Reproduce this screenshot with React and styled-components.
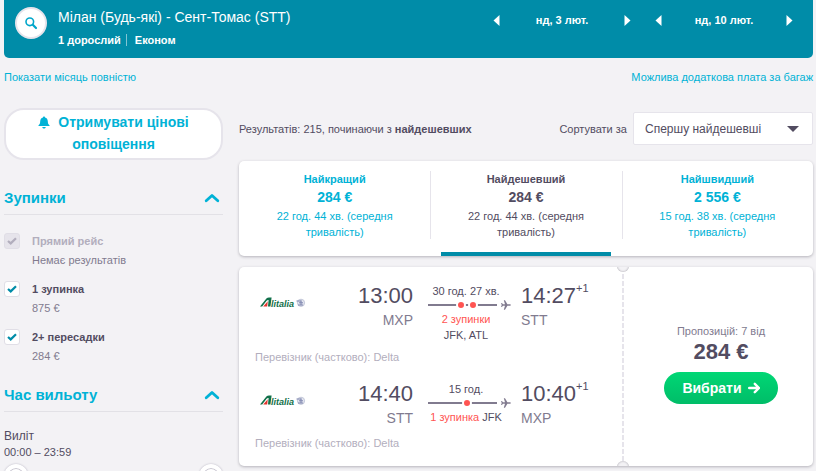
import React, { useState } from 'react'
import styled, { createGlobalStyle, css } from 'styled-components'

const tabs = [
    { id: 'best', name: 'Найкращий', price: '284 €', time: '22 год. 44 хв. (середня тривалість)' },
    { id: 'cheap', name: 'Найдешевший', price: '284 €', time: '22 год. 44 хв. (середня тривалість)' },
    { id: 'fast', name: 'Найшвидший', price: '2 556 €', time: '15 год. 38 хв. (середня тривалість)' },
]

const stopFilters = [
    { id: 'direct', name: 'Прямий рейс', note: 'Немає результатів', disabled: true },
    { id: 'one', name: '1 зупинка', note: '875 €' },
    { id: 'two', name: '2+ пересадки', note: '284 €' },
]

const legs = [
    { from: 'MXP', to: 'STT', start: '13:00', end: '14:27', duration: '30 год. 27 хв.', stops: '2 зупинки', via: ['JFK', 'ATL'] },
    { from: 'STT', to: 'MXP', start: '14:40', end: '10:40', duration: '15 год.', stops: '1 зупинка', via: ['JFK'] },
]

export default function App() {
    const [tab, setTab] = useState('cheap')

    return (
        <Page>
            <GlobalStyle />
            <Header>
                <SearchButton aria-label='Шукати'>
                    <svg width='14' height='14' viewBox='0 0 14 14' fill='none' stroke='currentColor' strokeWidth='1.6'>
                        <circle cx='5.8' cy='5.8' r='3.8' />
                        <path d='M8.8 8.8L12 12' strokeWidth='2.2' strokeLinecap='round' />
                    </svg>
                </SearchButton>
                <Trip>
                    <TripTitle>Мілан (Будь-які) - Сент-Томас (STT)</TripTitle>
                    <TripInfo>
                        <span>1 дорослий</span>
                        <span>Економ</span>
                    </TripInfo>
                </Trip>
                <Dates>
                    <DateStepper date='нд, 3 лют.' />
                    <DateStepper date='нд, 10 лют.' />
                </Dates>
            </Header>

            <Links>
                <Link href='#month'>Показати місяць повністю</Link>
                <Link href='#baggage'>Можлива додаткова плата за багаж</Link>
            </Links>

            <Columns>
                <Sidebar>
                    <AlertButton>
                        <svg width='12' height='13' viewBox='0 0 12 13' fill='currentColor'>
                            <path d='M6 0.5C6.6 0.5 7 .9 7 1.5C8.8 2 9.7 3.4 9.8 5.2C9.9 7.4 10.2 8 11.5 9.2V10H.5V9.2C1.8 8 2.1 7.4 2.2 5.2C2.3 3.4 3.2 2 5 1.5C5 .9 5.4 .5 6 .5Z' />
                            <path d='M4.2 11H7.8C7.5 12 6.8 12.5 6 12.5S4.5 12 4.2 11Z' />
                        </svg>
                        Отримувати цінові оповіщення
                    </AlertButton>

                    <FilterSection title='Зупинки'>
                        <StopList>
                            {stopFilters.map((item) => <StopFilter key={item.id} {...item} />)}
                        </StopList>
                    </FilterSection>

                    <FilterSection title='Час вильоту'>
                        <TimeFilter>
                            <TimeTitle>Виліт</TimeTitle>
                            <div>00:00 – 23:59</div>
                            <Slider>
                                <Range type='range' min='0' max='1439' defaultValue='0' aria-label='Виліт від' />
                                <Range type='range' min='0' max='1439' defaultValue='1439' aria-label='Виліт до' />
                            </Slider>
                        </TimeFilter>
                    </FilterSection>
                </Sidebar>

                <Main>
                    <Toolbar>
                        <Summary>Результатів: 215, починаючи з <b>найдешевших</b></Summary>
                        <SortLabel htmlFor='sort'>Сортувати за</SortLabel>
                        <SelectBox>
                            <Select id='sort' defaultValue='cheap'>
                                <option value='best'>Найкращі</option>
                                <option value='cheap'>Спершу найдешевші</option>
                                <option value='fast'>Спершу найшвидші</option>
                            </Select>
                            <Caret />
                        </SelectBox>
                    </Toolbar>

                    <Tabs>
                        {tabs.map((item) => (
                            <Tab key={item.id} $active={item.id === tab} onClick={() => setTab(item.id)}>
                                <TabName>{item.name}</TabName>
                                <TabPrice>{item.price}</TabPrice>
                                <TabTime>{item.time}</TabTime>
                            </Tab>
                        ))}
                    </Tabs>

                    <Ticket>
                        <Legs>
                            {legs.map((leg) => <Leg key={leg.start} {...leg} />)}
                        </Legs>
                        <Perforation />
                        <Offer>
                            <OfferCount>Пропозицій: 7 від</OfferCount>
                            <OfferPrice>284 €</OfferPrice>
                            <SelectButton>
                                Вибрати
                                <svg width='12' height='12' viewBox='0 0 12 12' fill='none' stroke='currentColor' strokeWidth='2.4' strokeLinecap='round' strokeLinejoin='round'>
                                    <path d='M1.2 6H10.5M6.8 1.8L11 6L6.8 10.2' />
                                </svg>
                            </SelectButton>
                        </Offer>
                    </Ticket>
                </Main>
            </Columns>
        </Page>
    )
}

function DateStepper({ date }) {
    return (
        <Stepper>
            <ArrowButton aria-label='Попередній день'>
                <svg width='7' height='11' viewBox='0 0 7 11' fill='currentColor'><path d='M6.5 0V11L.5 5.5Z' /></svg>
            </ArrowButton>
            <span>{date}</span>
            <ArrowButton aria-label='Наступний день'>
                <svg width='7' height='11' viewBox='0 0 7 11' fill='currentColor'><path d='M.5 0V11L6.5 5.5Z' /></svg>
            </ArrowButton>
        </Stepper>
    )
}

function FilterSection({ title, children }) {
    const [open, setOpen] = useState(true)

    return (
        <section>
            <SectionButton aria-expanded={open} onClick={() => setOpen(!open)}>
                {title}
                <svg width='16' height='10' viewBox='0 0 16 10' fill='none' stroke='currentColor' strokeWidth='2.8' strokeLinecap='round' strokeLinejoin='round'>
                    <path d='M2.2 7.8L8 2.4L13.8 7.8' />
                </svg>
            </SectionButton>
            {open && children}
        </section>
    )
}

function StopFilter({ id, name, note, disabled }) {
    return (
        <StopRow>
            <CheckCell $disabled={disabled}>
                <Checkbox id={id} type='checkbox' defaultChecked disabled={disabled} />
                <svg width='10' height='8' viewBox='0 0 10 8' fill='none' stroke='currentColor' strokeWidth='2.2'>
                    <path d='M1 4L3.7 6.4L9 1.2' />
                </svg>
            </CheckCell>
            <div>
                <StopName htmlFor={id} $disabled={disabled}>{name}</StopName>
                <StopNote>{note}</StopNote>
            </div>
        </StopRow>
    )
}

function Leg({ from, to, start, end, duration, stops, via }) {
    return (
        <div>
            <LegRow>
                <AirlineLogo />
                <Place $right>
                    <Time>{start}</Time>
                    <Code>{from}</Code>
                </Place>
                <Route>
                    <RouteText>{duration}</RouteText>
                    <Track>
                        <Line>
                            {via.map((code) => <Dot key={code} />)}
                        </Line>
                        <svg width='10' height='10' viewBox='0 0 10 10' fill='currentColor'>
                            <path d='M9.9 5C9.9 5.5 9.3 5.8 8.6 5.8H6.4L4 9.8H2.8L4 5.8H1.9L1 7H.1L.7 5L.1 3H1L1.9 4.2H4L2.8 .2H4L6.4 4.2H8.6C9.3 4.2 9.9 4.5 9.9 5Z' />
                        </svg>
                    </Track>
                    <RouteText><Stops>{stops}</Stops> <Via>{via.join(', ')}</Via></RouteText>
                </Route>
                <Place>
                    <Time>{end}<sup>+1</sup></Time>
                    <Code>{to}</Code>
                </Place>
            </LegRow>
            <Operator>Перевізник (частково): Delta</Operator>
        </div>
    )
}

function AirlineLogo() {
    return (
        <Logo width='48' height='14' viewBox='0 0 48 14' role='img' aria-label='Alitalia'>
            <path d='M1 11.5L7.4 3.6Q8.4 2.4 10 2.4H12.6L11.4 11.5H9L9.6 5Q8.6 4.6 7.6 5.8L3.2 11.5Z' fill='#11704a' />
            <path d='M4.2 11.5L8.8 6.2L8.2 11.5Z' fill='#e2342d' />
            <text x='12' y='11.5' fontSize='9' fontWeight='bold' fontStyle='italic' fill='#11704a'>litalia</text>
            <circle cx='42' cy='7.8' r='3.6' fill='#e4e6f0' stroke='#c3c7d9' />
            <path d='M37.5 6H42.5M39 10H44M42 5.6V10M40 7.8H44' stroke='#7d84ad' />
        </Logo>
    )
}

const GlobalStyle = createGlobalStyle`
    * {
        box-sizing: border-box;
    }
    html {
        scrollbar-width: none;
    }
    body {
        margin: 0;
        background: #f3f2f5;
        color: #524c61;
    }
    body, button, select {
        font-family: "Liberation Sans", Arial, sans-serif;
        font-size: 11px;
        line-height: 16px;
    }
    button {
        border: 0;
        padding: 0;
        background: none;
        cursor: pointer;
    }
    svg {
        flex: none;
    }
`

const Page = styled.div`
    padding: 0 3px 0 4px;
`

const Header = styled.header`
    display: flex;
    align-items: flex-start;
    height: 58px;
    padding: 7px 20px 0 11px;
    border-radius: 0 0 5px 5px;
    background: #008ca8;
    color: white;
`

const SearchButton = styled.button`
    display: flex;
    align-items: center;
    justify-content: center;
    width: 32px;
    height: 32px;
    border: 2px solid #e6e4eb;
    border-radius: 50%;
    background: white;
    color: #00a6ca;
`

const Trip = styled.div`
    flex: 1;
    margin-left: 11px;
`

const TripTitle = styled.h1`
    margin: 0;
    font-size: 14px;
    font-weight: normal;
    line-height: 20px;
`

const TripInfo = styled.div`
    display: flex;
    margin-top: 7px;
    font-weight: bold;
    line-height: 12px;

    span + span {
        margin-left: 5px;
        padding-left: 8px;
        border-left: 1px solid #80c5d4;
    }
`

const Dates = styled.div`
    display: flex;
    gap: 24px;
    padding-top: 5px;
`

const Stepper = styled.div`
    display: flex;
    align-items: center;
    justify-content: space-between;
    width: 138px;
    font-weight: bold;
`

const ArrowButton = styled.button`
    display: flex;
    color: white;
`

const Links = styled.nav`
    display: flex;
    justify-content: space-between;
    padding: 11px 0 23px;
`

const Link = styled.a`
    color: #00b2d6;
    text-decoration: none;
`

const Columns = styled.div`
    display: grid;
    grid-template-columns: 219px minmax(0, 1fr);
    gap: 16px;
`

const Sidebar = styled.aside`
    min-width: 0;
`

const AlertButton = styled.button`
    width: 100%;
    margin-bottom: 8px;
    padding: 1px 24px 3px;
    border: 2px solid #e6e4eb;
    border-radius: 20px;
    background: white;
    color: #00b2d6;
    font-size: 14px;
    font-weight: bold;
    line-height: 22px;

    svg {
        margin-right: 8px;
        vertical-align: -2px;
    }
`

const SectionButton = styled.button`
    display: flex;
    align-items: center;
    justify-content: space-between;
    width: 100%;
    margin-top: 14px;
    padding: 4px 3px 4px 0;
    border-bottom: 1px solid #e2e1e6;
    color: #00b2d6;
    font-size: 15px;
    font-weight: bold;
    line-height: 24px;
`

const StopList = styled.div`
    display: flex;
    flex-direction: column;
    gap: 12px;
    padding-top: 18px;
`

const StopRow = styled.div`
    display: flex;
    gap: 12px;
`

const CheckCell = styled.div`
    display: grid;
    place-items: center;
    width: 16px;
    height: 16px;
    color: ${({ $disabled }) => ($disabled ? '#b2aebd' : '#008ca8')};

    > * {
        grid-area: 1 / 1;
    }
    svg {
        pointer-events: none;
        visibility: hidden;
    }
    input:checked + svg {
        visibility: visible;
    }
`

const Checkbox = styled.input`
    appearance: none;
    width: 16px;
    height: 16px;
    margin: 0;
    border: 1px solid #e0dee6;
    border-radius: 3px;
    background: white;

    &:disabled {
        background: #e6e4eb;
    }
`

const StopName = styled.label`
    display: block;
    font-weight: bold;
    color: ${({ $disabled }) => ($disabled ? '#b2aebd' : '#524c61')};
`

const StopNote = styled.div`
    padding: 3px 0 1px;
    color: #817b8f;
`

const TimeFilter = styled.div`
    padding-top: 16px;
`

const TimeTitle = styled.div`
    font-size: 12px;
`

const Slider = styled.div`
    display: grid;
    height: 24px;
    margin-top: 4px;
    background: linear-gradient(#00b2d6, #00b2d6) center / 190px 2px no-repeat;
`

const thumb = css`
    appearance: none;
    width: 24px;
    height: 24px;
    border: 4px solid white;
    border-radius: 50%;
    background: white;
    box-shadow: 0 0 2px #b2aebd, inset 0 0 0 1px #c9c6d1;
    pointer-events: auto;
`

const Range = styled.input`
    appearance: none;
    grid-area: 1 / 1;
    width: 100%;
    height: 24px;
    margin: 0;
    background: none;
    pointer-events: none;

    &::-webkit-slider-thumb {
        ${thumb}
    }
    &::-moz-range-thumb {
        ${thumb}
    }
`

const Main = styled.main`
    min-width: 0;
`

const Toolbar = styled.div`
    display: flex;
    align-items: center;
    margin: 4px 0 16px;
`

const Summary = styled.div`
    flex: 1;
`

const SortLabel = styled.label`
    margin-right: 6px;
`

const SelectBox = styled.div`
    display: grid;
    align-items: center;
    width: 180px;

    > * {
        grid-area: 1 / 1;
    }
`

const Select = styled.select`
    appearance: none;
    width: 100%;
    height: 33px;
    padding: 0 11px;
    border: 1px solid #e6e4eb;
    border-radius: 2px;
    background: white;
    color: #524c61;
    font-size: 12px;
`

const Caret = styled.span`
    justify-self: end;
    margin-right: 14px;
    border: 6px solid transparent;
    border-top-color: #524c61;
    border-bottom: 0;
    pointer-events: none;
`

const card = css`
    border-radius: 5px;
    background: white;
    box-shadow: 0 1px 3px rgba(37, 32, 51, 0.3);
`

const Tabs = styled.div`
    ${card}
    display: grid;
    grid-template-columns: repeat(3, 1fr);
    padding-top: 10px;
`

const Tab = styled.button`
    display: flex;
    flex-direction: column;
    align-items: center;
    color: ${({ $active }) => ($active ? '#524c61' : '#00b2d6')};

    &::after {
        content: '';
        width: 170px;
        height: 4px;
        margin-top: 12px;
        background: ${({ $active }) => ($active ? '#008ca8' : 'transparent')};
    }
    & + & {
        background: linear-gradient(#e6e4eb, #e6e4eb) left top / 1px 68px no-repeat;
    }
`

const TabName = styled.span`
    font-weight: bold;
`

const TabPrice = styled.span`
    font-size: 14px;
    font-weight: bold;
    line-height: 20px;
`

const TabTime = styled.span`
    width: 130px;
    padding-top: 1px;
`

const Ticket = styled.article`
    ${card}
    display: flex;
    margin-top: 11px;
`

const Legs = styled.div`
    flex: 1;
    display: flex;
    flex-direction: column;
    gap: 16px;
    padding: 16px 16px 15px;
`

const LegRow = styled.div`
    display: flex;
    align-items: flex-start;
`

const Logo = styled.svg`
    margin: 12px 0 0 4px;
`

const Place = styled.div`
    flex: ${({ $right }) => ($right ? '1' : 'none')};
    width: 80px;
    text-align: ${({ $right }) => ($right ? 'right' : 'left')};
`

const Time = styled.div`
    height: 26px;
    font-size: 22px;
    line-height: 26px;

    sup {
        font-size: 11px;
        line-height: 1px;
        vertical-align: 11px;
    }
`

const Code = styled.div`
    color: #817b8f;
    font-size: 14px;
    line-height: 22px;
`

const Route = styled.div`
    width: 83px;
    margin: 0 10px 0 15px;
    text-align: center;
`

const RouteText = styled.div`
    padding-right: 7px;
`

const Stops = styled.span`
    color: #ff5452;
`

const Via = styled.span`
    white-space: nowrap;
`

const Track = styled.div`
    display: flex;
    align-items: center;
    gap: 4px;
    height: 12px;
    color: #817b8f;
`

const Line = styled.div`
    flex: 1;
    display: flex;
    align-items: center;
    justify-content: center;
    gap: 2px;
    height: 10px;
    padding-left: 8px;
    background: linear-gradient(#817b8f, #817b8f) center / 100% 2px no-repeat;
`

const Dot = styled.span`
    width: 10px;
    height: 10px;
    border: 2px solid white;
    border-radius: 50%;
    background: #ff5452;
`

const Operator = styled.div`
    margin-top: 6px;
    color: #b2aebd;
`

const Perforation = styled.div`
    position: relative;
    overflow: hidden;
    width: 12px;
    background: repeating-linear-gradient(#e6e4eb 0 5px, transparent 5px 7px) center / 2px 100% no-repeat;

    &::before,
    &::after {
        content: '';
        position: absolute;
        left: 0;
        width: 12px;
        height: 12px;
        border-radius: 50%;
        background: #f3f2f5;
        box-shadow: inset 0 0 2px rgba(37, 32, 51, 0.4);
    }
    &::before {
        top: -7px;
    }
    &::after {
        bottom: -7px;
    }
`

const Offer = styled.div`
    display: flex;
    flex-direction: column;
    align-items: center;
    justify-content: center;
    width: 184px;
    padding-bottom: 6px;
`

const OfferCount = styled.div`
    color: #817b8f;
`

const OfferPrice = styled.div`
    font-size: 22px;
    font-weight: bold;
    line-height: 26px;
`

const SelectButton = styled.button`
    display: flex;
    align-items: center;
    justify-content: center;
    gap: 6px;
    width: 114px;
    height: 32px;
    margin-top: 7px;
    border-radius: 16px;
    background: linear-gradient(#00d775, #00bd68);
    color: white;
    font-size: 14px;
    font-weight: bold;
`
